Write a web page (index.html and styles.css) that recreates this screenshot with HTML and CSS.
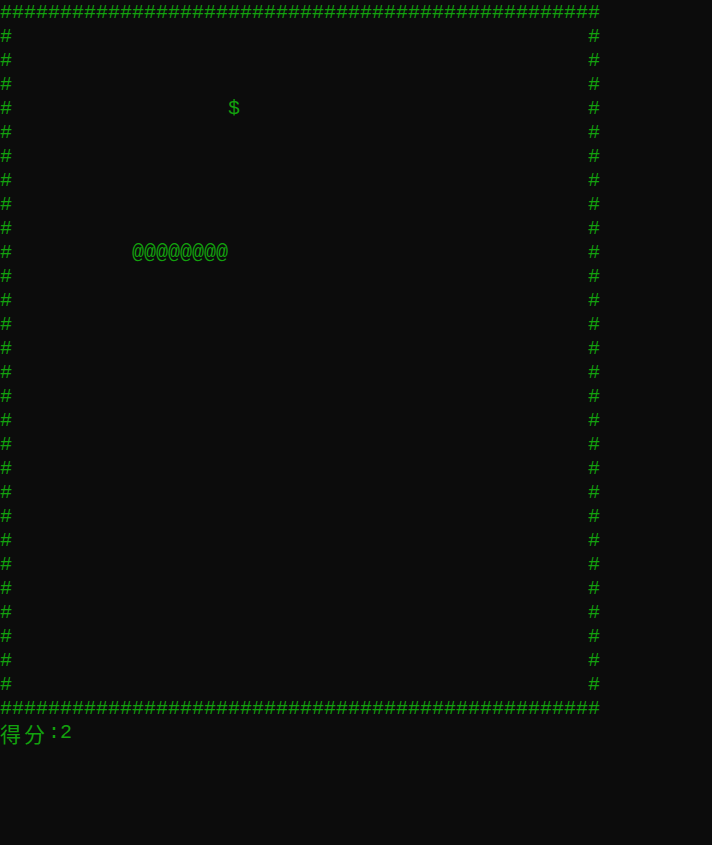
FILE: index.html
```html
<!DOCTYPE html>
<html>
<head>
    <meta charset="utf-8">
    <link rel="stylesheet" href="styles.css">
</head>
<body>
<pre class="console">##################################################
#                                                #
#                                                #
#                                                #
#                  $                             #
#                                                #
#                                                #
#                                                #
#                                                #
#                                                #
#          @@@@@@@@                              #
#                                                #
#                                                #
#                                                #
#                                                #
#                                                #
#                                                #
#                                                #
#                                                #
#                                                #
#                                                #
#                                                #
#                                                #
#                                                #
#                                                #
#                                                #
#                                                #
#                                                #
#                                                #
##################################################
<span class="wide">得</span><span class="wide">分</span>:2</pre>
</body>
</html>
```

FILE: styles.css
```css
html, body {
    margin: 0;
    background: #0c0c0c;
    height: 100%;
}

.console {
    margin: 0;
    padding-top: 1px;
    font-family: "Liberation Mono", "Noto Sans CJK SC", monospace;
    font-size: 20px;
    line-height: 24px;
    color: #13a10e;
}

.wide {
    display: inline-block;
    width: 24px;
    font-family: "Noto Sans CJK SC", sans-serif;
    font-size: 21px;
    line-height: 24px;
    vertical-align: top;
}
```
